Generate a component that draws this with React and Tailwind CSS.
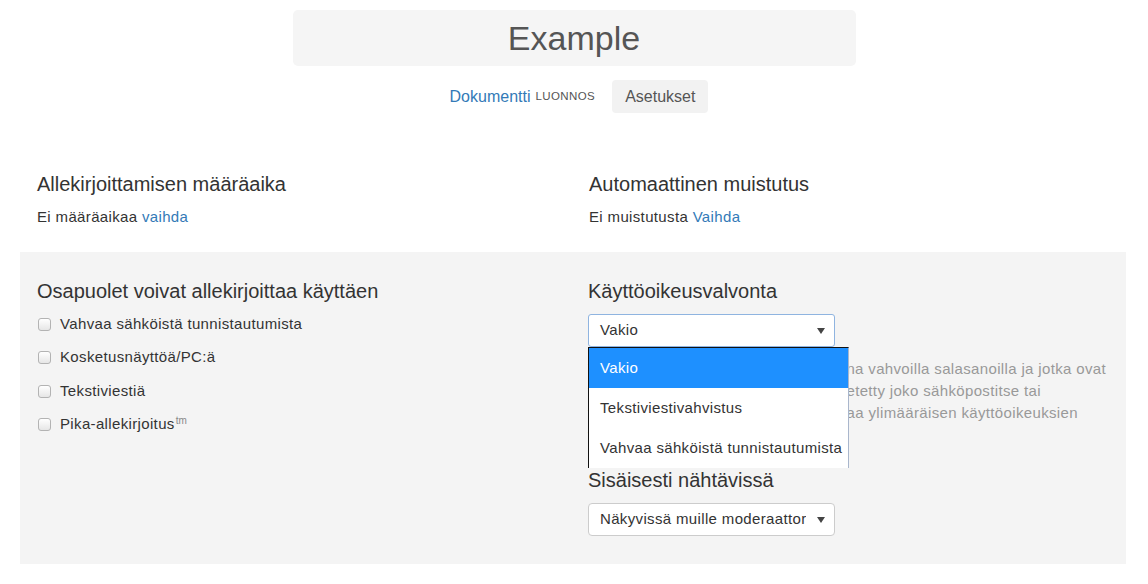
import React from 'react';

const Caret = () => (
  <svg className="w-[8px] h-[6px]" viewBox="0 0 8 6">
    <path d="M0 0 L8 0 L4 6 Z" fill="#444" />
  </svg>
);

const Box = () => (
  <span className="w-[13px] h-[13px] ml-[1px] shrink-0 rounded-[3px] border border-[#b3b3b3] bg-gradient-to-b from-white to-[#e6e6e6]" />
);

const methods = [
  { label: 'Vahvaa sähköistä tunnistautumista' },
  { label: 'Kosketusnäyttöä/PC:ä' },
  { label: 'Tekstiviestiä' },
  { label: 'Pika-allekirjoitus', tm: true },
];

const options = ['Vakio', 'Tekstiviestivahvistus', 'Vahvaa sähköistä tunnistautumista'];

export default function App() {
  return (
    <div className="min-h-screen bg-white text-[#333] font-['Liberation_Sans',Arial,sans-serif]">
      {/* Header */}
      <div className="flex flex-col items-center pt-[10px]">
        <div className="w-[563px] h-[56px] bg-[#f5f5f5] rounded-[5px] flex items-center justify-center">
          <h1 className="text-[34px] leading-none text-[#555]">Example</h1>
        </div>
        <div className="flex items-center mt-[14px] pl-[10px] text-[16px]">
          <a className="text-[#337ab7]">Dokumentti</a>
          <span className="ml-[5px] text-[11.5px] text-[#555] uppercase tracking-[0.4px]">Luonnos</span>
          <button className="ml-[17px] h-[33px] px-[13px] rounded-[4px] bg-[#f2f2f2] text-[#555] text-[16px]">
            Asetukset
          </button>
        </div>
      </div>

      {/* Deadline / reminder */}
      <div className="mx-[20px] px-[17px] grid grid-cols-2 gap-x-[30px] pt-[60px] pb-[25px]">
        <div>
          <h3 className="text-[20px] leading-[22px]">Allekirjoittamisen määräaika</h3>
          <p className="mt-[12px] text-[15px] tracking-[0.35px] leading-[20px]">
            Ei määräaikaa <a className="text-[#337ab7]">vaihda</a>
          </p>
        </div>
        <div>
          <h3 className="text-[20px] leading-[22px]">Automaattinen muistutus</h3>
          <p className="mt-[12px] text-[15px] tracking-[0.35px] leading-[20px]">
            Ei muistutusta <a className="text-[#337ab7]">Vaihda</a>
          </p>
        </div>
      </div>

      {/* Gray settings block */}
      <div className="mx-[20px] w-[1106px] bg-[#f4f4f4] px-[17px] pt-[28px] pb-[28px] grid grid-cols-2 gap-x-[30px]">
        <div>
          <h3 className="text-[20px] leading-[22px]">Osapuolet voivat allekirjoittaa käyttäen</h3>
          <div className="mt-[12px] flex flex-col gap-[13.5px]">
            {methods.map((m, i) => (
              <label key={i} className="flex items-center h-[20px] text-[15px] tracking-[0.35px]">
                <Box />
                <span className="ml-[9px]">
                  {m.label}
                  {m.tm && <sup className="text-[10px] tracking-normal text-[#888] ml-[1px]">tm</sup>}
                </span>
              </label>
            ))}
          </div>
        </div>

        <div>
          <h3 className="text-[20px] leading-[22px]">Käyttöoikeusvalvonta</h3>
          <div className="relative mt-[12px] w-[247px]">
            <div className="h-[33px] border border-[#8fb4e0] rounded-[3px] bg-white flex items-center justify-between pl-[11px] pr-[9px] text-[15px] tracking-[0.35px]">
              <span>Vakio</span>
              <Caret />
            </div>
            {/* open option list */}
            <div className="absolute left-0 top-full w-[261px] bg-white border-t border-l border-t-[#111] border-l-[#111] border-r border-r-[#a9b6cc] z-10">
              {options.map((o, i) => (
                <div
                  key={o}
                  className={
                    i === 0
                      ? 'h-[40px] flex items-center pl-[11px] text-[15px] tracking-[0.35px] bg-[#1e90ff] text-white'
                      : 'h-[40px] flex items-center pl-[11px] text-[15px] tracking-[0.35px] text-[#333]'
                  }
                >
                  {o}
                </div>
              ))}
            </div>
          </div>
          <p className="mt-[11px] text-[15px] tracking-[0.35px] leading-[22px] text-[#999] whitespace-nowrap">
            Vakio: osapuolet, joilla tili on suojattuna vahvoilla salasanoilla ja jotka ovat
            <br />
            tunnistettuja. Linkki on myös aina lähetetty joko sähköpostitse tai
            <br />
            tekstiviestitse, ja tekstivahvistus tuottaa ylimääräisen käyttöoikeuksien
            <br />
            valvonnan tason.
          </p>

          <h3 className="mt-[23px] text-[20px] leading-[22px]">Sisäisesti nähtävissä</h3>
          <div className="mt-[12px] w-[247px] h-[33px] border border-[#ccc] rounded-[4px] bg-white flex items-center justify-between pl-[11px] pr-[9px] text-[15px] tracking-[0.35px]">
            <span className="w-[206px] overflow-hidden whitespace-nowrap">Näkyvissä muille moderaattoreille</span>
            <Caret />
          </div>
        </div>
      </div>
    </div>
  );
}
